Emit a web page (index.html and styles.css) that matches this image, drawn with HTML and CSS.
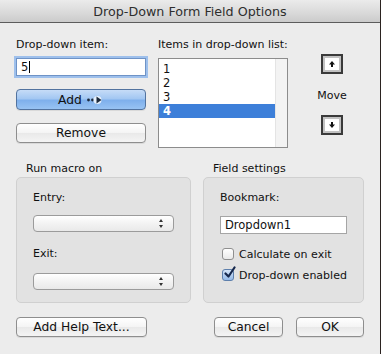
FILE: index.html
```html
<!DOCTYPE html>
<html lang="en">
<head>
  <meta charset="UTF-8">
  <meta name="viewport" content="width=device-width, initial-scale=1.0">
  <title>Drop-Down Form Field Options</title>
  <link rel="stylesheet" href="styles.css">
</head>
<body>
  <div class="dialog">
    <div class="titlebar">Drop-Down Form Field Options</div>

    <div class="top">
      <div class="col-item">
        <div class="label">Drop-down item:</div>
        <div class="field focused">5<span class="caret"></span></div>
        <button class="btn btn-default btn-add">Add
          <svg class="add-icon" width="18" height="10" viewBox="0 0 18 10">
            <circle cx="2.5" cy="5" r="1.4" fill="#1d2a3c"/>
            <circle cx="6.5" cy="5" r="1.4" fill="#1d2a3c"/>
            <circle cx="11.5" cy="5" r="4" fill="#e6f0fb"/>
            <path d="M10.5 1.5 L15.5 5 L10.5 8.5 Z" fill="#1d2a3c"/>
          </svg>
        </button>
        <button class="btn btn-remove">Remove</button>
      </div>

      <div class="col-list">
        <div class="label">Items in drop-down list:</div>
        <div class="listbox">
          <ul class="items">
            <li>1</li>
            <li>2</li>
            <li>3</li>
            <li class="selected">4</li>
          </ul>
          <div class="track"></div>
        </div>
      </div>

      <div class="col-move">
        <button class="move-btn move-up">
          <svg width="8" height="8" viewBox="0 0 8 8"><path d="M4 1 L7 4.5 H5 V7 H3 V4.5 H1 Z" fill="#111"/></svg>
        </button>
        <div class="move-label">Move</div>
        <button class="move-btn move-down">
          <svg width="8" height="8" viewBox="0 0 8 8"><path d="M4 7 L7 3.5 H5 V1 H3 V3.5 H1 Z" fill="#111"/></svg>
        </button>
      </div>
    </div>

    <div class="groups">
      <div class="group group-macro">
        <div class="caption">Run macro on</div>
        <div class="box">
          <div class="label">Entry:</div>
          <div class="select select-entry"><span class="arrows"></span></div>
          <div class="label label-exit">Exit:</div>
          <div class="select select-exit"><span class="arrows"></span></div>
        </div>
      </div>

      <div class="group group-settings">
        <div class="caption">Field settings</div>
        <div class="box">
          <div class="label">Bookmark:</div>
          <div class="field bookmark">Dropdown1</div>
          <div class="check-row first">
            <span class="checkbox"></span>Calculate on exit
          </div>
          <div class="check-row">
            <span class="checkbox checked">
              <svg width="14" height="14" viewBox="0 0 14 14"><path d="M2.5 7.5 L5.5 10.5 L11.5 1.5" fill="none" stroke="#16284d" stroke-width="2.2" stroke-linecap="round" stroke-linejoin="round"/></svg>
            </span>Drop-down enabled
          </div>
        </div>
      </div>
    </div>

    <div class="actions">
      <button class="btn btn-help">Add Help Text...</button>
      <div class="spacer"></div>
      <button class="btn btn-cancel">Cancel</button>
      <button class="btn btn-ok">OK</button>
    </div>
  </div>
</body>
</html>
```

FILE: styles.css
```css
body {
  margin: 0;
  padding: 0;
  background-color: #2b2320;
  font-family: 'DejaVu Sans', 'Liberation Sans', sans-serif;
  color: #111;
}

.dialog {
  width: 380px;
  height: 354px;
  background-color: #ececec;
  overflow: hidden;
}

.titlebar {
  height: 22px;
  line-height: 23px;
  text-align: center;
  font-size: 12.7px;
  color: #2e2e2e;
  background: linear-gradient(#ebebeb, #d9d9d9 60%, #cbcbcb);
  border-bottom: 1px solid #5c5c5c;
}

.label {
  font-size: 11px;
  line-height: 14px;
  color: #111;
}

/* top area */

.top {
  display: flex;
  padding: 15px 0 0 16px;
}

.col-item {
  width: 130px;
  display: flex;
  flex-direction: column;
}

.field {
  box-sizing: border-box;
  height: 18px;
  margin-top: 6px;
  padding-left: 4px;
  font-size: 11.5px;
  line-height: 17px;
  background-color: #fff;
  border: 1px solid #9a9a9a;
  border-top-color: #7d7d7d;
}

.field.focused {
  border-color: #6f93c6;
  box-shadow: 0 0 0 2px #9ec0ec;
}

.caret {
  display: inline-block;
  width: 1px;
  height: 12px;
  margin-left: 1px;
  vertical-align: -2px;
  background-color: #000;
}

.btn {
  box-sizing: border-box;
  height: 20px;
  padding: 0;
  font-family: inherit;
  font-size: 12.3px;
  color: #111;
  background: linear-gradient(#ffffff, #f4f4f4 50%, #e9e9e9 52%, #f4f4f4);
  border: 1px solid #8e8e8e;
  border-radius: 4px;
  box-shadow: 0 1px 0 rgba(0, 0, 0, 0.08);
}

.btn-default {
  background: linear-gradient(#c6dcf7, #a3c7f2 45%, #7fb0ec 55%, #98c3f3);
  border-color: #52739f;
}

.btn-add {
  height: 21px;
  margin-top: 13px;
  display: flex;
  align-items: center;
  justify-content: center;
  gap: 4px;
}

.add-icon {
  margin-top: 1px;
}

.btn-remove {
  margin-top: 13px;
}

.col-list {
  width: 130px;
  margin-left: 12px;
  display: flex;
  flex-direction: column;
}

.listbox {
  display: flex;
  box-sizing: border-box;
  height: 90px;
  margin-top: 6px;
  background-color: #fff;
  border: 1px solid #8c8c8c;
}

.items {
  flex: 1;
  margin: 0;
  padding: 3px 0 0;
  list-style: none;
  font-size: 11.5px;
}

.items li {
  height: 14px;
  line-height: 14px;
  padding-left: 4px;
}

.items li.selected {
  background-color: #3d7fd9;
  color: #fff;
  font-weight: bold;
}

.track {
  width: 11px;
  background-color: #f3f3f3;
  border-left: 1px solid #e4e4e4;
}

.col-move {
  width: 88px;
  display: flex;
  flex-direction: column;
  align-items: center;
}

.move-btn {
  box-sizing: border-box;
  width: 22px;
  height: 20px;
  padding: 0;
  display: flex;
  align-items: center;
  justify-content: center;
  background-color: #fff;
  border: 2px solid #3a3a3a;
  box-shadow: inset 0 0 0 2px #c2c2c2;
}

.move-up {
  margin-top: 16px;
}

.move-label {
  margin-top: 15px;
  font-size: 11px;
  line-height: 14px;
}

.move-down {
  margin-top: 12px;
}

/* group boxes */

.groups {
  display: grid;
  grid-template-columns: 175px 161px;
  column-gap: 12px;
  padding-left: 16px;
  margin-top: 14px;
}

.caption {
  padding-left: 10px;
  font-size: 11px;
  line-height: 14px;
}

.box {
  box-sizing: border-box;
  height: 126px;
  margin-top: 1px;
  padding: 13px 16px 0;
  background-color: #e2e2e2;
  border: 1px solid #d0d0d0;
  border-radius: 5px;
}

.select {
  position: relative;
  box-sizing: border-box;
  height: 17px;
  margin-top: 10px;
  background: linear-gradient(#ffffff, #f3f3f3 50%, #e9e9e9);
  border: 1px solid #9b9b9b;
  border-radius: 4px;
}

.arrows {
  position: absolute;
  right: 9px;
  top: 3px;
  width: 5px;
  height: 9px;
}

.arrows::before,
.arrows::after {
  content: '';
  position: absolute;
  left: 0;
  border-left: 2.5px solid transparent;
  border-right: 2.5px solid transparent;
}

.arrows::before {
  top: 0;
  border-bottom: 3px solid #333;
}

.arrows::after {
  bottom: 0;
  border-top: 3px solid #333;
}

.label-exit {
  margin-top: 15px;
}

.select-exit {
  margin-top: 12px;
}

.bookmark {
  margin-top: 11px;
  padding-left: 4px;
  line-height: 16px;
  border-color: #a5a5a5;
}

.check-row {
  display: flex;
  align-items: center;
  gap: 5px;
  height: 16px;
  padding-left: 2px;
  margin-top: 5px;
  font-size: 11px;
}

.check-row.first {
  margin-top: 12px;
}

.checkbox {
  position: relative;
  box-sizing: border-box;
  width: 12px;
  height: 12px;
  background: linear-gradient(#ffffff, #e9e9e9);
  border: 1px solid #8f8f8f;
  border-radius: 3px;
}

.checkbox.checked {
  background: linear-gradient(#d4e4f7, #94b9e8);
  border-color: #5d7fac;
}

.checkbox svg {
  position: absolute;
  left: 0;
  top: -4px;
}

/* bottom buttons */

.actions {
  display: flex;
  gap: 13px;
  width: 348px;
  margin: 14px 0 0 16px;
}

.spacer {
  flex: 1;
}

.btn-help {
  width: 131px;
}

.btn-cancel {
  width: 69px;
}

.btn-ok {
  width: 68px;
}
```
